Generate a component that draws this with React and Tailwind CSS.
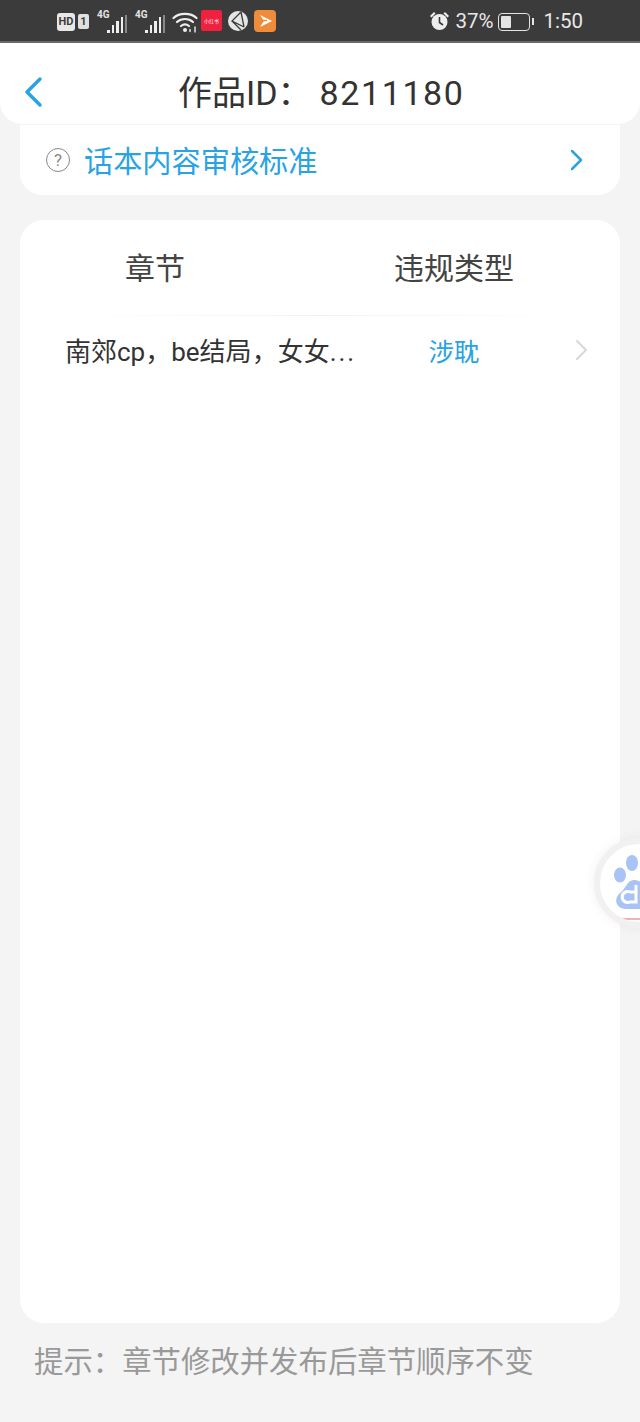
import React from "react";

const cjk = "font-['Roboto','Noto_Sans_CJK_SC',sans-serif]";
// full-width punctuation, as in the app
const COLON = "\uFF1A";
const COMMA = "\uFF0C";

function StatusBar() {
  return (
    <div className="h-[43px] pt-[2px] bg-[#3b3b3b] border-b-2 border-[#8a8a8a]/60 flex items-center justify-between pl-[57px] pr-[57px] text-[#e8e8e8] font-['Roboto',sans-serif]">
      <div className="flex items-center h-full">
        <div className="w-[18px] h-[18px] rounded-[3px] bg-[#e8e8e8] text-[#3b3b3b] text-[11px] font-bold leading-[18px] text-center">HD</div>
        <div className="ml-[3px] w-[11px] h-[15px] rounded-[2px] bg-[#e0e0e0] text-[#3b3b3b] text-[11px] font-bold leading-[15px] text-center">1</div>
        <Signal className="ml-[8px]" />
        <Signal className="ml-[8px]" />
        <svg className="ml-[7px]" width="26" height="22" viewBox="0 0 26 22" fill="none" stroke="#eee" strokeWidth="2.200" strokeLinecap="round">
          <path d="M1.500 7C7 1.500 19 1.500 24.500 7" />
          <path d="M5 11c4.500-4 11.500-4 16 0" />
          <path d="M9 15c2.500-2 5.500-2 8 0" />
          <circle cx="13" cy="19" r="2" fill="#eee" stroke="none" />
          <path d="M18 18.500v2M23 16v5" strokeWidth="1.400" />
        </svg>
        <div className="ml-[3px] -mt-[2px] w-[21px] h-[21px] rounded-[2px] bg-[#f0203f] text-white text-[5px] leading-[21px] text-center font-['Noto_Sans_CJK_SC',sans-serif]">小红书</div>
        <svg className="ml-[6px] -mt-[2px]" width="20" height="20" viewBox="0 0 20 20">
          <circle cx="10" cy="10" r="10" fill="#e6e6e6" />
          <path d="M13 1 4 10l12 6M13 1l3 15M4 10l9 9" stroke="#3b3b3b" strokeWidth="1.300" fill="none" />
        </svg>
        <svg className="ml-[6px] -mt-[2px]" width="22" height="22" viewBox="0 0 22 22">
          <rect width="22" height="22" rx="4" fill="#ef8c3a" />
          <path d="M6 5 18 11 6 17l4-6Z" fill="#fff" />
          <path d="M9 10.500h4" stroke="#ef8c3a" strokeWidth="1.500" />
        </svg>
      </div>
      <div className="flex items-center h-full">
        <svg width="21" height="21" viewBox="0 0 21 21" fill="#eee">
          <circle cx="10.500" cy="11" r="8" />
          <path d="M10.500 6v5.500l3.500 2.500" stroke="#3b3b3b" strokeWidth="1.600" fill="none" />
          <path d="M1 5l4-4 1.500 1.500-4 4ZM20 5l-4-4-1.500 1.500 4 4Z" />
        </svg>
        <span className="ml-[5px] text-[20.500px] leading-none">37%</span>
        <div className="ml-[5px] w-[32px] h-[18px] rounded-[4px] border-[1.500px] border-[#e4e4e4] p-[2px]">
          <div className="w-[10px] h-full bg-[#e4e4e4] rounded-[1px]"></div>
        </div>
        <div className="ml-[2px] w-[2px] h-[7px] bg-[#e4e4e4]"></div>
        <span className="ml-[9px] text-[20.500px] leading-none">1:50</span>
      </div>
    </div>
  );
}

function Signal({ className }) {
  return (
    <div className={`relative w-[30px] h-[24px] ${className}`}>
      <span className="absolute left-0 top-0 text-[10px] leading-[10px] font-bold text-[#e4e4e4]">4G</span>
      <div className="absolute right-0 bottom-[1px] flex items-end gap-[2px]">
        <div className="w-[2.500px] h-[3px] bg-[#eee]"></div>
        <div className="w-[2.500px] h-[8px] bg-[#eee]"></div>
        <div className="w-[2.500px] h-[12px] bg-[#eee]"></div>
        <div className="w-[2.500px] h-[16px] bg-[#eee]"></div>
        <div className="w-[2px] h-[18px] bg-[#888]"></div>
      </div>
    </div>
  );
}

function Header() {
  return (
    <div className="h-[81px] bg-white rounded-b-[22px] flex items-center relative">
      <svg className="ml-[24px] mt-[16px]" width="20" height="32" viewBox="0 0 20 32" fill="none" stroke="#2aa3e4" strokeWidth="3.500" strokeLinecap="round" strokeLinejoin="round">
        <path d="M16 3 3 16l13 13" />
      </svg>
      <div className="absolute left-[178px] top-[27px] text-[34px] leading-[46px] text-[#333] whitespace-nowrap">作品ID{COLON}<span className="ml-[8px] tracking-[1.600px]">8211180</span></div>
    </div>
  );
}

function Rules() {
  return (
    <div className="mx-[20px] mt-[1px] h-[70px] bg-white rounded-b-[22px] flex items-center pl-[26px] pr-[36px]">
      <div className="w-[24px] h-[24px] rounded-full border border-[#888] text-[#888] text-[17px] leading-[22px] text-center">?</div>
      <div className="ml-[14px] mt-[3px] text-[29.200px] leading-[38px] text-[#2aa3e4] flex-1">话本内容审核标准</div>
      <svg width="14" height="24" viewBox="0 0 14 24" fill="none" stroke="#2aa3e4" strokeWidth="2.500" strokeLinecap="round" strokeLinejoin="round">
        <path d="M2 3l9 9-9 9" />
      </svg>
    </div>
  );
}

function Violations() {
  return (
    <div className="mx-[20px] mt-[25px] h-[1103px] bg-white rounded-[24px]">
      <div className="h-[95px] pt-[2px] grid grid-cols-[270px_328px] items-center text-[30px] leading-[40px] text-[#444]">
        <div className="text-center">章节</div>
        <div className="text-center">违规类型</div>
      </div>
      <div className="h-[1px] mx-[50px] bg-gradient-to-r from-white via-[#f2f2f2] to-white"></div>
      <div className="grid grid-cols-[384px_100px_1fr] items-center h-[72px]">
        <div className="pl-[45px] text-[26px] leading-[36px] text-[#333] whitespace-nowrap">南郊cp{COMMA}be结局{COMMA}女女<span className="tracking-[2px]">...</span></div>
        <div className="text-[25.500px] leading-[36px] text-[#2aa3e4] text-center">涉耽</div>
        <div className="flex justify-end pr-[32px]">
          <svg className="-mt-[3px]" width="13" height="24" viewBox="0 0 13 24" fill="none" stroke="#d8d8d8" strokeWidth="2" strokeLinecap="round" strokeLinejoin="round">
            <path d="M2 2l9 9-9 9" />
          </svg>
        </div>
      </div>
    </div>
  );
}

function FloatBall() {
  return (
    <div className="absolute left-[594px] top-[838px] w-[90px] h-[90px] rounded-full bg-white border-[6px] border-[#f2f0f0] shadow-[0_0_12px_rgba(0,0,0,0.06)] overflow-hidden">
      <svg className="absolute left-[14px] top-[5px]" width="40" height="66" viewBox="0 0 40 66" fill="#a9c3f4">
        <ellipse cx="18" cy="14" rx="6" ry="8" />
        <ellipse cx="6" cy="26" rx="6" ry="7.500" />
        <path d="M20 31c5 0 8 3 12 7v22H12C2 60-1 50 6 44c5-3 7-13 14-13Z" />
        <path d="M22 36v17h-6a5.500 5.500 0 1 1 0-10h6" fill="none" stroke="#fff" strokeWidth="3" />
      </svg>
      <div className="absolute left-[22px] right-0 bottom-[2px] h-[2px] bg-[#eab4b4]"></div>
    </div>
  );
}

export default function App() {
  return (
    <div className={`relative w-[640px] h-[1422px] overflow-hidden bg-[#f4f4f4] ${cjk}`}>
      <StatusBar />
      <Header />
      <Rules />
      <Violations />
      <div className="ml-[34px] mt-[19px] text-[29.400px] leading-[40px] text-[#999] whitespace-nowrap">提示{COLON}章节修改并发布后章节顺序不变</div>
      <FloatBall />
    </div>
  );
}
